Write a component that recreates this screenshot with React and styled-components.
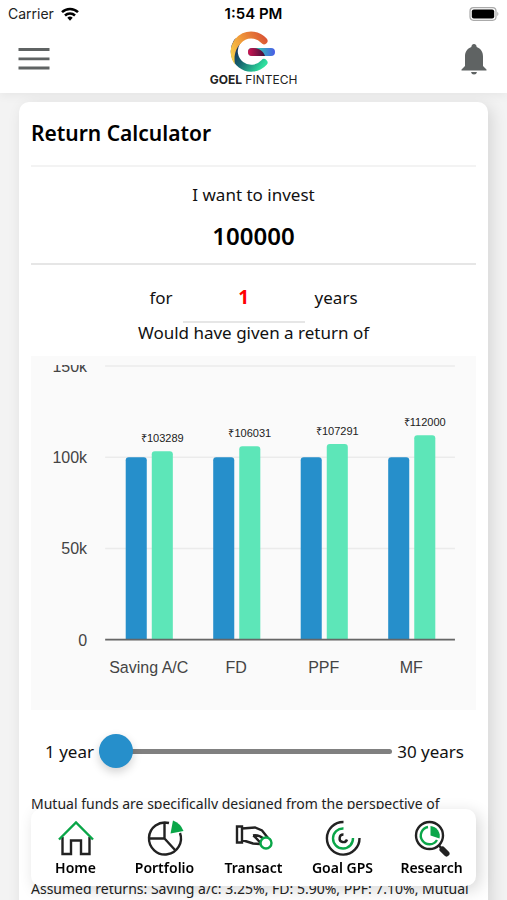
import React, { useState } from 'react'
import styled, { createGlobalStyle } from 'styled-components'

const GlobalStyle = createGlobalStyle`
* {
  box-sizing: border-box;
}
body {
  margin: 0;
  background-color: #f3f3f3;
  color: #111;
  font-family: 'Noto Sans', 'Open Sans', sans-serif;
}
`
const Screen = styled.div`
height: 100vh;
display: flex;
flex-direction: column;
overflow: hidden;
`
const Top = styled.header`
background-color: #fff;
box-shadow: 0 2px 10px rgba(0, 0, 0, 0.06);
`
const StatusBar = styled.div`
height: 28px;
padding: 0 8px;
display: grid;
grid-template-columns: 1fr auto 1fr;
align-items: center;
font-family: Inter, 'Liberation Sans', sans-serif;
font-size: 14px;
line-height: 28px;
color: #000;
`
const Carrier = styled.div`
display: flex;
align-items: center;
gap: 7px;
color: #222;
`
const Clock = styled.time`
font-size: 15px;
font-weight: 600;
`
const BatteryIcon = styled.svg`
justify-self: end;
`
const NavRow = styled.div`
height: 65px;
padding: 0 16px 4px;
display: grid;
grid-template-columns: 1fr auto 1fr;
align-items: center;
`
const IconButton = styled.button`
border: 0;
padding: 0;
background: none;
display: flex;
cursor: pointer;
justify-self: ${props => props.$end ? 'end' : 'start'};
`
const Brand = styled.a`
display: flex;
flex-direction: column;
align-items: center;
color: #222;
text-decoration: none;
`
const BrandName = styled.span`
font-family: Inter, 'Liberation Sans', sans-serif;
font-size: 12px;
line-height: 14px;
white-space: nowrap;
`
const Content = styled.main`
flex: 1;
min-height: 0;
padding: 9px 19px 0;
overflow: hidden;
`
const Card = styled.section`
padding: 0 12px 120px;
background-color: #fff;
border-radius: 10px;
box-shadow: 4px 4px 16px rgba(0, 0, 0, 0.12);
`
const Title = styled.h1`
margin: 0;
padding: 15px 0 16px;
border-bottom: 2px solid #f3f3f3;
font-size: 21px;
line-height: 32px;
font-weight: 600;
color: #000;
`
const Form = styled.form`
display: flex;
flex-direction: column;
text-align: center;
font-size: 17px;
line-height: 24px;
`
const AmountLabel = styled.label`
padding-top: 16px;
`
const NumberInput = styled.input`
border: 0;
border-bottom: 2px solid #e6e6e6;
border-radius: 0;
padding: 0;
background: none;
font-family: inherit;
font-weight: 600;
text-align: center;
outline: none;
`
const AmountInput = styled(NumberInput)`
height: 58px;
font-size: 24px;
color: #000;
`
const YearsRow = styled.div`
padding-top: 8px;
display: flex;
justify-content: center;
gap: 10px;
line-height: 50px;
`
const YearsInput = styled(NumberInput)`
width: 122px;
height: 50px;
font-size: 19px;
font-weight: 700;
color: #f00;
`
const Result = styled.p`
margin: 0;
line-height: 20px;
`
const Chart = styled.svg`
width: 100%;
height: auto;
margin-top: 13px;
display: block;
background-color: #fafafa;
font-family: 'Liberation Sans', Arial, sans-serif;
`
const SliderRow = styled.div`
margin: 17px 12px 0 14px;
display: flex;
align-items: center;
gap: 5px;
font-size: 17px;
line-height: 50px;
white-space: nowrap;
`
const Slider = styled.input`
flex: 1;
min-width: 0;
height: 34px;
margin: 0;
background: none;
appearance: none;
cursor: pointer;
&::-webkit-slider-runnable-track {
  height: 5px;
  border-radius: 3px;
  background-color: #808080;
}
&::-webkit-slider-thumb {
  appearance: none;
  width: 34px;
  height: 34px;
  margin-top: -15px;
  border-radius: 50%;
  background-color: #268fcb;
  box-shadow: 0 4px 10px rgba(0, 0, 0, 0.18);
}
`
const Note = styled.p`
margin: 0 0 64px;
padding-top: 16px;
font-size: 14px;
line-height: 21px;
color: #222;
& + & {
  padding-top: 0;
}
`
const TabBar = styled.nav`
position: fixed;
left: 31px;
right: 31px;
bottom: 14px;
height: 77px;
display: grid;
grid-template-columns: repeat(5, 1fr);
background-color: #fff;
border-radius: 10px;
box-shadow: 4px 4px 16px rgba(0, 0, 0, 0.16);
`
const Tab = styled.a`
padding-top: 9px;
display: flex;
flex-direction: column;
align-items: center;
color: #000;
font-size: 14px;
line-height: 20px;
font-weight: 600;
text-decoration: none;
white-space: nowrap;
`
const TabIcon = styled.svg`
width: 40px;
height: 40px;
fill: none;
stroke: #222;
stroke-width: 2.4;
`

const GREEN = '#0aa648'

const returns = [
  { name: 'Saving A/C', value: 103289 },
  { name: 'FD', value: 106031 },
  { name: 'PPF', value: 107291 },
  { name: 'MF', value: 112000 }
]

const ticks = [
  { label: '150k', value: 150000 },
  { label: '100k', value: 100000 },
  { label: '50k', value: 50000 },
  { label: '0', value: 0 }
]

const BASE = 283
const toY = value => BASE - value * 273 / 150000

function barPath (x, value) {
  const y = toY(value)
  return `M${x} ${BASE}V${y + 3}q0 -3 3 -3h15q3 0 3 3V${BASE}z`
}

function ReturnChart () {
  return (
    <Chart viewBox='0 0 444 353' role='img' aria-label='Returns by investment type'>
      <svg x='0' y='9' width='444' height='344'>
        <g transform='translate(0 -9)'>
          {ticks.map(tick => (
            <g key={tick.label}>
              <path d={`M74 ${toY(tick.value)}H423`} stroke='#ebebeb' strokeWidth='1.5' />
              <text x='56' y={toY(tick.value) + 6} textAnchor='end' fontSize='16' fill='#444'>{tick.label}</text>
            </g>
          ))}
          {returns.map((item, i) => {
            const x = 94.5 + i * 87.3
            return (
              <g key={item.name}>
                <path d={barPath(x, 100000)} fill='#268fcb' />
                <path d={barPath(x + 26, item.value)} fill='#5de6b8' />
                <text x={x + 36.5} y={toY(item.value) - 9} textAnchor='middle' fontSize='11' fill='#222'>₹{item.value}</text>
                <text x={x + 23} y='316' textAnchor='middle' fontSize='16' fill='#444'>{item.name}</text>
              </g>
            )
          })}
          <path d={`M74 ${BASE}H423`} stroke='#666' strokeWidth='1.5' />
        </g>
      </svg>
    </Chart>
  )
}

function Logo () {
  return (
    <svg width='46' height='42' viewBox='0 0 46 42' aria-hidden='true'>
      <defs>
        <linearGradient id='ringTop' gradientUnits='userSpaceOnUse' x1='2' y1='28' x2='36' y2='8'>
          <stop offset='0' stopColor='#f8d04c' />
          <stop offset='0.45' stopColor='#f09a3a' />
          <stop offset='1' stopColor='#da5634' />
        </linearGradient>
        <linearGradient id='ringBottom' gradientUnits='userSpaceOnUse' x1='6' y1='14' x2='34' y2='34'>
          <stop offset='0' stopColor='#1b2858' />
          <stop offset='0.4' stopColor='#14646e' />
          <stop offset='1' stopColor='#2fdf9e' />
        </linearGradient>
        <linearGradient id='barRight' x1='0' y1='0' x2='1' y2='0'>
          <stop offset='0.4' stopColor='#35c0b4' />
          <stop offset='1' stopColor='#4a5ae8' />
        </linearGradient>
        <linearGradient id='barLeft' x1='0' y1='0' x2='1' y2='0'>
          <stop offset='0' stopColor='#d01452' />
          <stop offset='1' stopColor='#3c1038' />
        </linearGradient>
      </defs>
      <path d='M34 31.500A17 17 0 0 1 7 11' fill='none' stroke='url(#ringBottom)' strokeWidth='7' strokeLinecap='round' />
      <path d='M34 9.800A17 17 0 0 0 8.200 10' fill='none' stroke='url(#ringTop)' strokeWidth='7' strokeLinecap='round' />
      <path d='M5.700 7.500A20.500 20.500 0 0 0 5 33.500C3.500 25 5.500 17 11.500 11.500z' fill='url(#ringTop)' />
      <rect x='18' y='17' width='27' height='8' rx='4' fill='url(#barRight)' />
      <path d='M22 17C29 17 33 20 35 25H22a4 4 0 0 1 0 -8z' fill='url(#barLeft)' />
    </svg>
  )
}

function HomeIcon () {
  return (
    <TabIcon viewBox='0 0 40 40'>
      <path d='M6.500 19V36H15V22.500H25V36H33.500V19' />
      <path d='M3 21.500L20 4.500L37 21.500' stroke={GREEN} />
    </TabIcon>
  )
}

function PortfolioIcon () {
  return (
    <TabIcon viewBox='0 0 40 40'>
      <path d='M35 15A16 16 0 1 1 24 5M19.500 4.500V20.500H3.500M19.500 20.500L30.500 32.500' />
      <path d='M28 2.500A18 18 0 0 1 38.500 13L25.500 15.500z' fill={GREEN} stroke='none' />
    </TabIcon>
  )
}

function TransactIcon () {
  return (
    <TabIcon viewBox='0 0 40 40'>
      <path d='M3 8.500H8V24.500H3zM8 10.500L21 9.500L28 12.500L34 20M8 22L19 25.500L26 26M19 17.500C22 18.500 22.500 22.500 27.500 25M19 17.500C24 16.500 27 18.500 30 21' />
      <circle cx='32' cy='25' r='5.500' fill='#fff' stroke={GREEN} />
    </TabIcon>
  )
}

function GoalIcon () {
  return (
    <TabIcon viewBox='0 0 40 40' strokeWidth='2.800'>
      <path d='M20.500 4A16.300 16.300 0 1 0 36.500 20' />
      <path d='M20.500 10.500A10 10 0 1 0 30 20' stroke={GREEN} />
      <path d='M20.500 16.500A3.800 3.800 0 1 0 24 21.500' />
    </TabIcon>
  )
}

function ResearchIcon () {
  return (
    <TabIcon viewBox='0 0 40 40'>
      <circle cx='17.500' cy='17.500' r='13.500' />
      <path d='M27 27.500L30 31' />
      <path d='M30.500 31.500L34.500 35.500' strokeWidth='6' strokeLinecap='round' />
      <path d='M16 9A8.700 8.700 0 1 0 25 22' stroke={GREEN} />
      <path d='M18.500 8A10 10 0 0 1 27.500 20.500L18.500 17.500z' fill={GREEN} stroke='none' />
    </TabIcon>
  )
}

const tabs = [
  { name: 'Home', Icon: HomeIcon },
  { name: 'Portfolio', Icon: PortfolioIcon },
  { name: 'Transact', Icon: TransactIcon },
  { name: 'Goal GPS', Icon: GoalIcon },
  { name: 'Research', Icon: ResearchIcon }
]

function App () {
  const [amount, setAmount] = useState('100000')
  const [years, setYears] = useState('1')

  return (
    <Screen>
      <GlobalStyle />
      <Top>
        <StatusBar>
          <Carrier>
            Carrier
            <svg width='18' height='14' viewBox='0 0 18 14' fill='none' stroke='#000' strokeWidth='2.500' aria-hidden='true'>
              <path d='M1 5.200A11.500 11.500 0 0 1 17 5.200M4 8.500A7.200 7.200 0 0 1 14 8.500' />
              <path d='M6.300 10.800A4 4 0 0 1 11.700 10.800L9 13.700z' fill='#000' stroke='none' />
            </svg>
          </Carrier>
          <Clock>1:54 PM</Clock>
          <BatteryIcon width='30' height='14' viewBox='0 0 30 14' aria-hidden='true'>
            <rect x='1' y='0.700' width='26' height='12.600' rx='3.500' fill='#fff' stroke='#aaa' strokeWidth='1.200' />
            <rect x='2.800' y='2.500' width='22.400' height='9' rx='2' fill='#000' />
            <path d='M28.300 4.800Q30.500 7 28.300 9.200z' fill='#aaa' />
          </BatteryIcon>
        </StatusBar>
        <NavRow>
          <IconButton aria-label='Menu'>
            <svg width='36' height='26' viewBox='0 0 36 26' stroke='#5f6363' strokeWidth='2.800'>
              <path d='M2.500 3.500H33.500M2.500 12.800H33.500M2.500 22H33.500' />
            </svg>
          </IconButton>
          <Brand href='#home'>
            <Logo />
            <BrandName><b>GOEL</b> FINTECH</BrandName>
          </Brand>
          <IconButton $end aria-label='Notifications'>
            <svg width='34' height='34' viewBox='0 0 34 34' fill='#5f6363'>
              <path d='M17 2a2.600 2.600 0 0 1 2.600 3C24 6.500 26 10 26 14.500V24L29.500 27.500V28.500H4.500V27.500L8 24V14.500C8 10 10 6.500 14.400 5A2.600 2.600 0 0 1 17 2zM14 30H20Q19.500 32.500 17 32.500T14 30z' />
            </svg>
          </IconButton>
        </NavRow>
      </Top>
      <Content>
        <Card>
          <Title>Return Calculator</Title>
          <Form>
            <AmountLabel htmlFor='amount'>I want to invest</AmountLabel>
            <AmountInput
              id='amount'
              inputMode='numeric'
              value={amount}
              onChange={e => setAmount(e.target.value)}
            />
            <YearsRow>
              <label htmlFor='years'>for</label>
              <YearsInput
                id='years'
                inputMode='numeric'
                value={years}
                onChange={e => setYears(e.target.value)}
              />
              <label htmlFor='years'>years</label>
            </YearsRow>
            <Result>Would have given a return of</Result>
          </Form>
          <ReturnChart />
          <SliderRow>
            <label htmlFor='range'>1 year</label>
            <Slider
              id='range'
              type='range'
              min='1'
              max='30'
              value={years}
              onChange={e => setYears(e.target.value)}
            />
            <label htmlFor='range'>30 years</label>
          </SliderRow>
          <Note>Mutual funds are specifically designed from the perspective of</Note>
          <Note>Assumed returns: Saving a/c: 3.25%, FD: 5.90%, PPF: 7.10%, Mutual fund: 12%</Note>
        </Card>
      </Content>
      <TabBar>
        {tabs.map(({ name, Icon }) => (
          <Tab key={name} href={`#${name.toLowerCase().replace(' ', '-')}`}>
            <Icon />
            {name}
          </Tab>
        ))}
      </TabBar>
    </Screen>
  )
}

export default App
